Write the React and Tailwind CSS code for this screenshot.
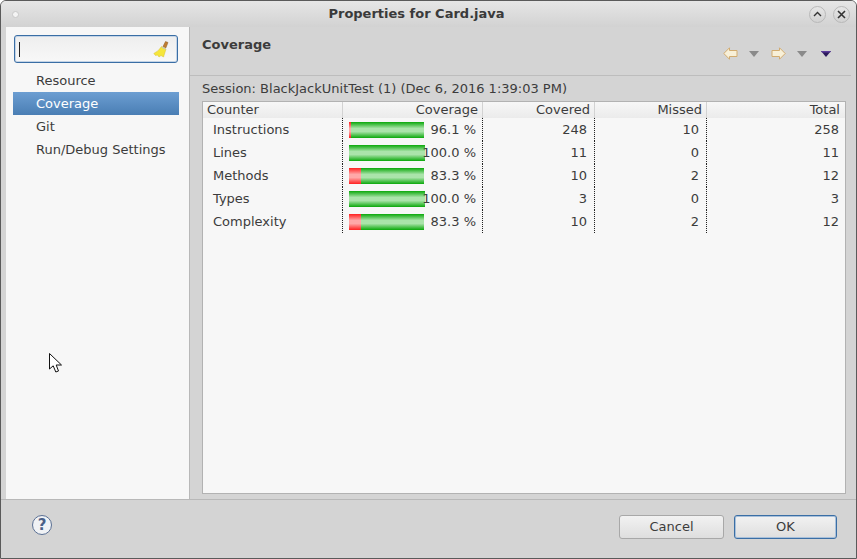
const rows = [
  { name: 'Instructions', pct: '96.1 %', red: 2, width: 75, covered: 248, missed: 10, total: 258 },
  { name: 'Lines', pct: '100.0 %', red: 0, width: 76, covered: 11, missed: 0, total: 11 },
  { name: 'Methods', pct: '83.3 %', red: 12, width: 75, covered: 10, missed: 2, total: 12 },
  { name: 'Types', pct: '100.0 %', red: 0, width: 76, covered: 3, missed: 0, total: 3 },
  { name: 'Complexity', pct: '83.3 %', red: 12, width: 75, covered: 10, missed: 2, total: 12 },
];

const navItems = ['Resource', 'Coverage', 'Git', 'Run/Debug Settings'];

function Bar({ red, width }) {
  return (
    <div className="flex h-4 shrink-0" style={{ width }}>
      {red > 0 && (
        <div
          className="h-full bg-[linear-gradient(#ff2020,#ffa8a8_40%,#ffa8a8_60%,#ff2020)]"
          style={{ width: red }}
        />
      )}
      <div className="h-full flex-1 bg-[linear-gradient(#0aa80a,#aae4aa_40%,#aae4aa_60%,#0aa80a)]" />
    </div>
  );
}

function CoverageTable() {
  return (
    <div className="mb-[5px] ml-[12px] mr-[5px] flex-1 border border-[#b2b2b2] bg-[#f7f7f7]">
      <div className="grid h-[16px] grid-cols-[140px_140px_112px_112px_1fr] bg-[linear-gradient(#f7f7f7,#ebebeb)] leading-[15px]">
        <div className="border-r border-[#d2d2d2] pl-[4px]">Counter</div>
        <div className="border-r border-[#d2d2d2] pr-[4px] text-right">Coverage</div>
        <div className="border-r border-[#d2d2d2] pr-[4px] text-right">Covered</div>
        <div className="border-r border-[#d2d2d2] pr-[4px] text-right">Missed</div>
        <div className="pr-[5px] text-right">Total</div>
      </div>
      {rows.map((r) => (
        <div
          key={r.name}
          className="grid h-[23px] grid-cols-[140px_140px_112px_112px_1fr] items-stretch leading-[23px]"
        >
          <div className="border-r border-dotted border-[#222] pl-[10px]">{r.name}</div>
          <div className="flex items-center justify-between whitespace-nowrap border-r border-dotted border-[#222] pl-[6px] pr-[6px]">
            <Bar red={r.red} width={r.width} />
            <span className="-ml-[4px]">{r.pct}</span>
          </div>
          <div className="border-r border-dotted border-[#222] pr-[7px] text-right">{r.covered}</div>
          <div className="border-r border-dotted border-[#222] pr-[7px] text-right">{r.missed}</div>
          <div className="pr-[6px] text-right">{r.total}</div>
        </div>
      ))}
    </div>
  );
}

function Broom() {
  return (
    <svg width="16" height="18" viewBox="0 0 16 18">
      <path d="M10 6.5 L12.5 1.5 L15 2.5 L12.8 8 Z" fill="#c07c30" stroke="#8a5a20" strokeWidth="0.5" />
      <path d="M8.5 6.5 L13 9 L10.5 17 L8 15.5 L6 17 L4.5 15 L2.5 15.5 L0.8 13.5 Q6 11 8.5 6.5 Z" fill="#f6e63a" stroke="#d8c030" strokeWidth="0.5" />
      <path d="M8.8 7 L12.6 9.2" stroke="#c8c8b4" strokeWidth="1.4" />
    </svg>
  );
}

function NavArrow({ flip }) {
  return (
    <svg width="15" height="13" viewBox="0 0 15 13" className={flip ? 'scale-x-[-1]' : ''}>
      <path d="M0.8 6.5 L6.5 0.8 L6.5 3.5 L14 3.5 L14 9.5 L6.5 9.5 L6.5 12.2 Z" fill="#f8f0d8" stroke="#d2ac70" strokeWidth="1" />
    </svg>
  );
}

function DropTri({ color = '#8a8a8a', edge }) {
  return (
    <svg width="10" height="6" viewBox="0 0 10 6">
      <path d="M0 0 H10 L5 6 Z" fill={color} />
      {edge && <path d="M0 0 H10 L9 1.4 H1 Z" fill={edge} />}
    </svg>
  );
}

function TitleButton({ children }) {
  return (
    <div className="flex h-[17px] w-[17px] items-center justify-center rounded-full border border-[#b8b8b8] bg-[linear-gradient(#e6e6e6,#d2d2d2)]">
      {children}
    </div>
  );
}

function Cursor() {
  return (
    <svg width="14" height="21" viewBox="0 0 14 21" className="absolute left-[48px] top-[352px]">
      <path d="M0.5 0.5 L0.5 16 L4.2 12.8 L6.8 19 L9.5 18 L7.2 12 L12.5 12 Z" fill="#fff" stroke="#111" strokeWidth="1" strokeLinejoin="round" />
    </svg>
  );
}

export default function App() {
  return (
    <div className="relative flex h-[559px] w-[857px] flex-col overflow-hidden rounded-t-[6px] border border-[#5a5a5a] bg-[#d4d4d4] font-['DejaVu_Sans',sans-serif] text-[13px] text-[#3c3c3c]">
      <div className="flex h-[26px] shrink-0 items-center bg-[linear-gradient(#e6e6e6,#d2d2d2)] pl-[11px] pr-[6px]">
        <div className="h-[7px] w-[7px] rounded-full border border-[#c8c8c8] bg-[#f4f4f4]" />
        <div className="flex-1 pl-[5px] text-center font-bold text-[#3a3a3a]">Properties for Card.java</div>
        <div className="flex gap-[7px]">
          <TitleButton>
            <svg width="9" height="6" viewBox="0 0 9 6"><path d="M1 5 L4.5 1.5 L8 5" fill="none" stroke="#333" strokeWidth="1.4" /></svg>
          </TitleButton>
          <TitleButton>
            <svg width="9" height="9" viewBox="0 0 9 9"><path d="M1 1 L8 8 M8 1 L1 8" fill="none" stroke="#333" strokeWidth="1.6" /></svg>
          </TitleButton>
        </div>
      </div>

      <div className="ml-[5px] mr-[5px] flex h-[472px] shrink-0">
        <div className="flex w-[184px] shrink-0 flex-col border-r border-[#b8b8b8] bg-[#f7f7f7] pl-[7px] pr-[10px] pt-[8px]">
          <div className="mx-px flex h-[28px] items-center justify-between rounded-[3px] border border-[#3a6ea5] bg-[linear-gradient(#eeeeee,#f8f8f8)] pl-[4px] pr-[8px] shadow-[inset_0_0_0_1px_#c4d4e6]">
            <div className="h-[15px] w-px bg-[#222]" />
            <Broom />
          </div>
          <div className="mt-[6px]">
            {navItems.map((item) => (
              <div
                key={item}
                className={
                  item === 'Coverage'
                    ? 'h-[23px] bg-[linear-gradient(#6c9ed2,#4a7eb4)] pl-[23px] leading-[23px] text-white'
                    : 'h-[23px] pl-[23px] leading-[23px]'
                }
              >
                {item}
              </div>
            ))}
          </div>
        </div>

        <div className="flex min-w-0 flex-1 flex-col">
          <div className="flex h-[49px] shrink-0 border-b border-[#bdbdbd] pl-[12px]">
            <div className="flex-1 pt-[9px] font-bold leading-[17px]">Coverage</div>
            <div className="mr-[20px] flex items-center gap-[11px] pt-[5px]">
              <NavArrow />
              <DropTri />
              <div className="ml-px flex"><NavArrow flip /></div>
              <DropTri />
              <div className="ml-[3px] flex"><DropTri color="#2c1a5c" edge="#5a3a9a" /></div>
            </div>
          </div>
          <div className="h-[25px] shrink-0 whitespace-nowrap pl-[12px] pt-[4px] leading-[17px]">Session: BlackJackUnitTest (1) (Dec 6, 2016 1:39:03 PM)</div>
          <CoverageTable />
        </div>
      </div>

      <div className="flex flex-1 items-start justify-between border-t border-[#b8b8b8] pl-[31px] pr-[19px] pt-[15px]">
        <div className="flex h-[20px] w-[20px] items-center justify-center rounded-full border border-[#5a7094] bg-[#f0f2f5] text-[15px] font-bold leading-none text-[#4a6088]">?</div>
        <div className="flex gap-[10px]">
          <button className="h-[24px] w-[105px] rounded-[3px] border border-[#a8a8a8] bg-[linear-gradient(#f2f2f2,#dedede)] leading-[22px] text-[#3c3c3c]">Cancel</button>
          <button className="h-[24px] w-[103px] rounded-[3px] border border-[#3a6ea5] bg-[linear-gradient(#f2f2f2,#dedede)] leading-[22px] text-[#3c3c3c] shadow-[inset_0_0_0_1px_#a8c0da]">OK</button>
        </div>
      </div>

      <Cursor />
    </div>
  );
}
